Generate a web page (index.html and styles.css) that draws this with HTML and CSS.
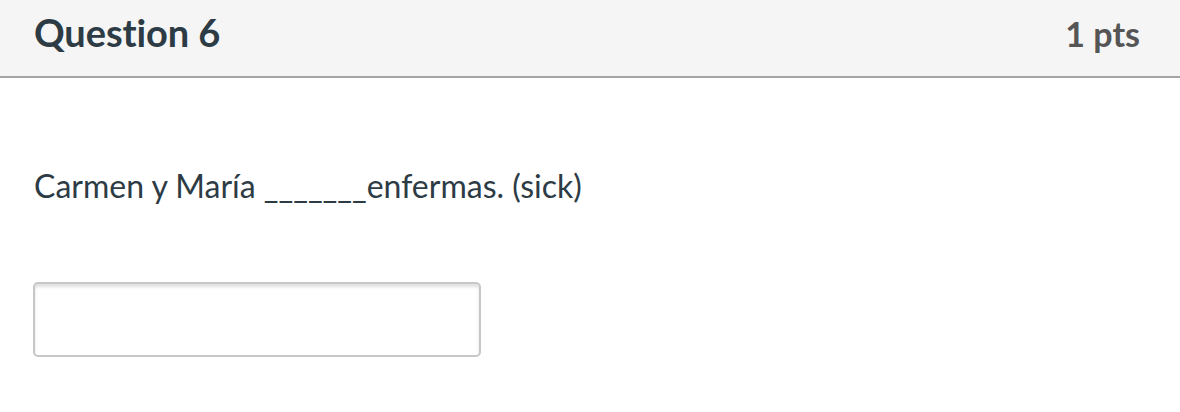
FILE: index.html
```html
<!DOCTYPE html>
<html lang="es">
<head>
<meta charset="utf-8">
<link rel="stylesheet" href="styles.css">
</head>
<body>
<div class="question">
  <div class="header">
    <h2 class="title">Question 6</h2>
    <div class="points">1 pts</div>
  </div>
  <div class="content">
    <p class="text">Carmen y María _______enfermas. (sick)</p>
    <input class="answer" type="text" aria-label="Answer">
  </div>
</div>
</body>
</html>
```
FILE: styles.css
```css
html, body {
  margin: 0;
  padding: 0;
  background: #ffffff;
}
body {
  font-family: Lato, "Liberation Sans", sans-serif;
  width: 1180px;
  height: 412px;
  overflow: hidden;
}
.header {
  display: flex;
  justify-content: space-between;
  align-items: baseline;
  box-sizing: border-box;
  height: 78px;
  padding: 13px 40px 0 34px;
  background: #f5f5f5;
  border-bottom: 2px solid #a5a5a5;
}
.title {
  margin: 0;
  font-size: 38px;
  line-height: 38px;
  font-weight: 700;
  color: #2d3b45;
  letter-spacing: -0.1px;
}
.points {
  font-size: 34px;
  line-height: 38px;
  font-weight: 700;
  color: #555555;
}
.content {
  padding: 0 34px;
}
.text {
  margin: 90px 0 0 0;
  font-size: 32px;
  line-height: 36px;
  color: #2d3b45;
}
.answer {
  display: block;
  box-sizing: border-box;
  margin: 78px 0 0 -1px;
  width: 448px;
  height: 75px;
  border: 2px solid #c7c7c7;
  border-radius: 5px;
  box-shadow: inset 0 3px 3px rgba(0,0,0,0.12);
  background: #ffffff;
}
```
